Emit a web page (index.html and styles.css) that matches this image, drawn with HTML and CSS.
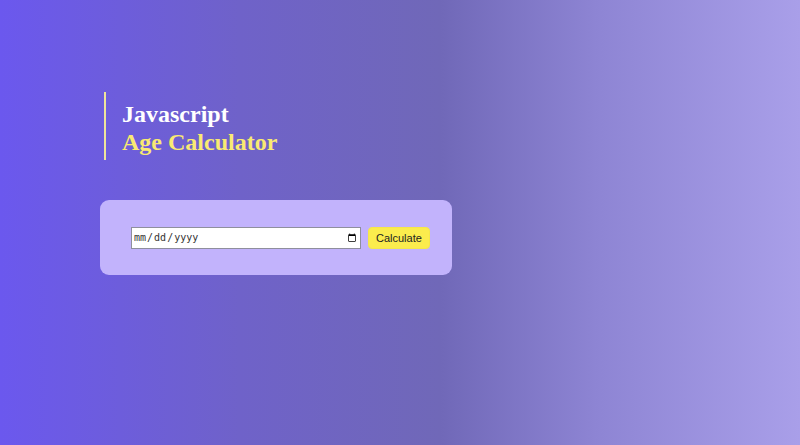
FILE: index.html
```html
<!DOCTYPE html>
<html>
<head>
<meta charset="utf-8">
<link rel="stylesheet" href="styles.css">
</head>
<body>
<div class="page">
  <div class="heading">
    <h1 class="title"><span class="line1">Javascript</span><span class="line2">Age Calculator</span></h1>
  </div>
  <div class="card">
    <input class="date" type="date">
    <button class="btn">Calculate</button>
  </div>
</div>
</body>
</html>
```
FILE: styles.css
```css
html, body { margin: 0; padding: 0; }
body {
  width: 800px;
  height: 445px;
  overflow: hidden;
  background: linear-gradient(to right, #6b58ee 0%, #6f62c9 30%, #7068b8 55%, #8e85d4 75%, #a99fe9 100%);
  font-family: "Liberation Serif", serif;
}
.page {
  padding: 92px 0 0 100px;
}
.heading {
  margin-left: 4px;
  border-left: 2px solid #efe49a;
  padding: 8px 0 4px 16px;
}
.title {
  margin: 0;
  font-size: 24px;
  line-height: 28px;
  font-weight: bold;
}
.line1 { display: block; color: #ffffff; }
.line2 { display: block; color: #f9ea72; }
.card {
  margin-top: 40px;
  width: 352px;
  height: 75px;
  box-sizing: border-box;
  background: #c2b3fc;
  border-radius: 9px;
  display: flex;
  align-items: center;
  padding: 0 0 0 31px;
  gap: 7px;
}
.date {
  width: 230px;
  height: 22px;
  box-sizing: border-box;
  margin: 0;
  border: 1px solid #8f8f9d;
  font-family: "DejaVu Sans Mono", monospace;
  font-size: 10px;
  padding: 1px 1px;
  background: #fff;
  color: #333;
}
.btn {
  height: 22px;
  margin: 0;
  padding: 0 7px;
  border: 1px solid #f5e74a;
  border-radius: 4px;
  background: #fbec4d;
  font-family: "Liberation Sans", sans-serif;
  font-size: 11px;
  color: #222;
}
```
